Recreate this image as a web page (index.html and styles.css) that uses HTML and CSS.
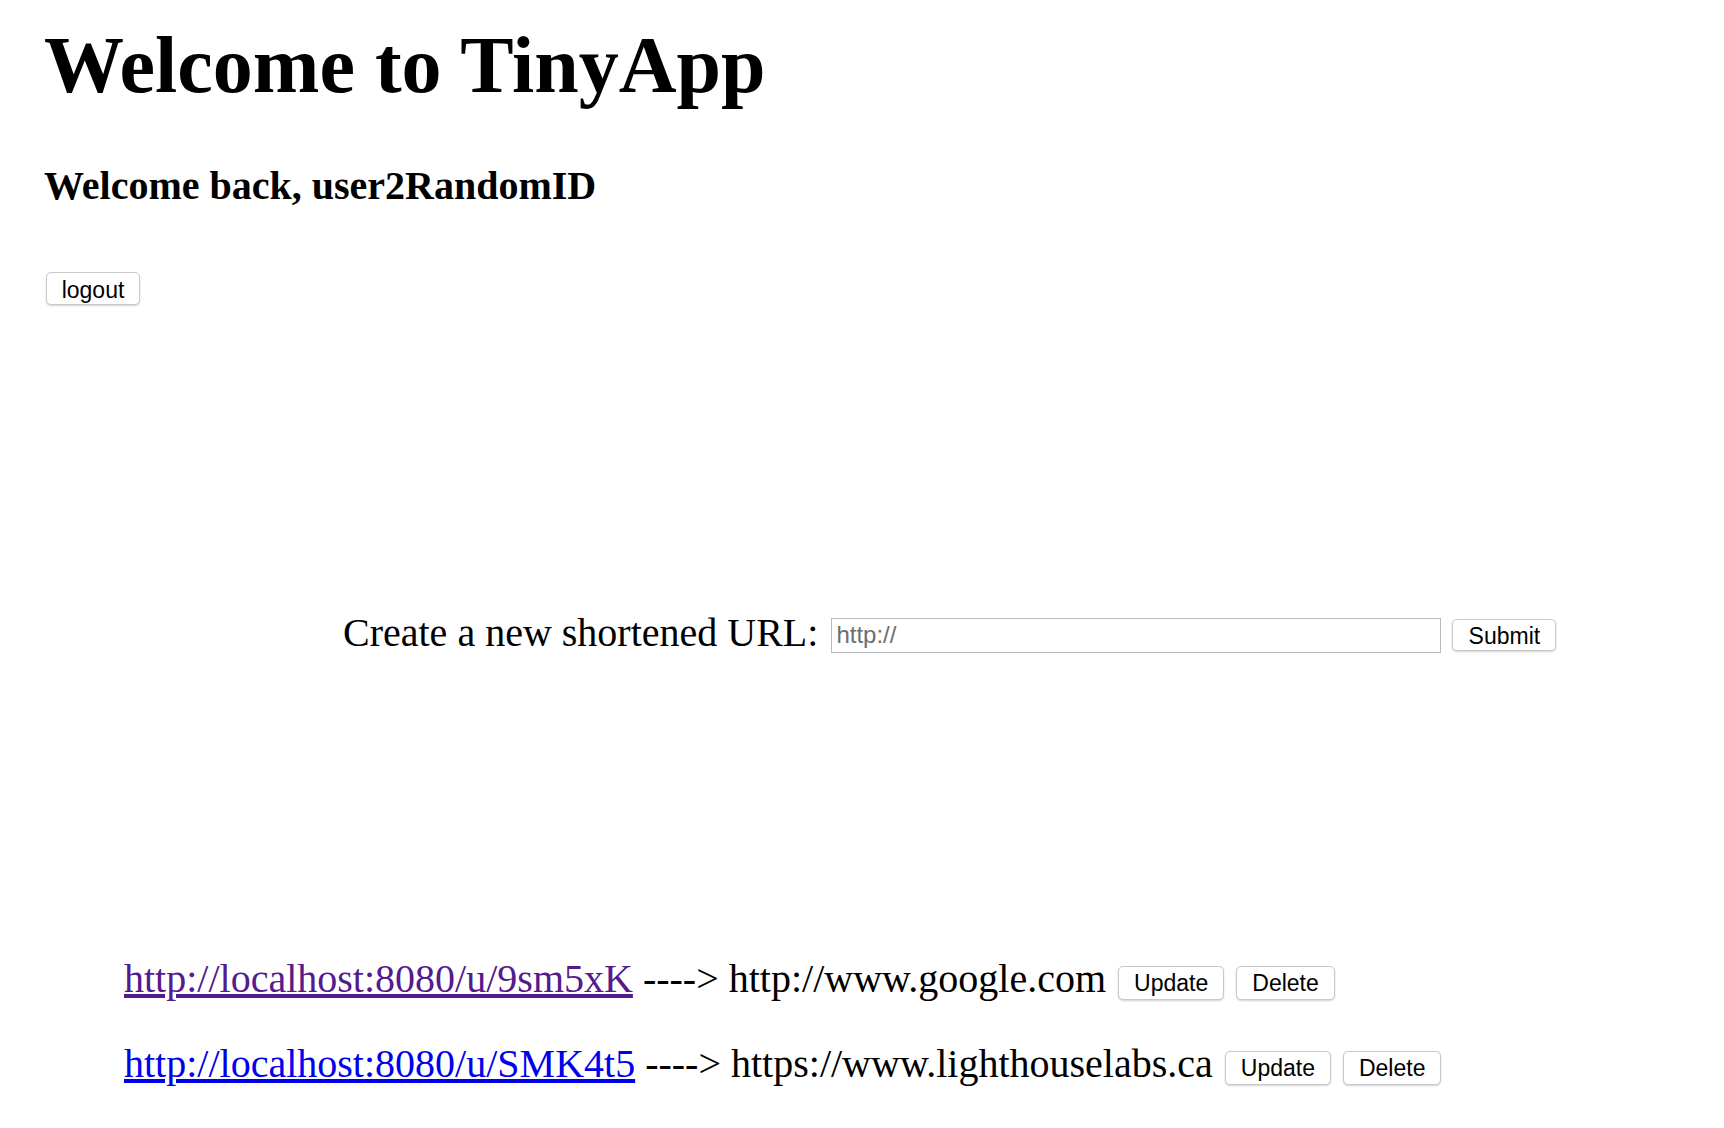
FILE: index.html
```html
<!DOCTYPE html>
<html lang="en">
<head>
<meta charset="utf-8">
<title>TinyApp</title>
<link rel="stylesheet" href="styles.css">
</head>
<body>
<header class="top">
  <h1 class="title">Welcome to TinyApp</h1>
  <h2 class="greeting">Welcome back, user2RandomID</h2>
  <form class="logout-form"><button type="button" class="btn">logout</button></form>
</header>
<main class="content">
  <form class="create-form">
    <label class="create-label" for="longURL">Create a new shortened URL:</label>
    <input class="url-input" id="longURL" type="text" placeholder="http://">
    <button type="button" class="btn">Submit</button>
  </form>
  <ul class="url-list">
    <li class="url-row"><a class="short-link visited" href="#">http://localhost:8080/u/9sm5xK</a> ----&gt; http://www.google.com<form class="inline-form"><button type="button" class="btn">Update</button></form><form class="inline-form"><button type="button" class="btn">Delete</button></form></li>
    <li class="url-row"><a class="short-link" href="#">http://localhost:8080/u/SMK4t5</a> ----&gt; https://www.lighthouselabs.ca<form class="inline-form"><button type="button" class="btn">Update</button></form><form class="inline-form"><button type="button" class="btn">Delete</button></form></li>
  </ul>
</main>
</body>
</html>
```
FILE: styles.css
```css
html, body {
  margin: 0;
  padding: 0;
  background: #ffffff;
}
body {
  font-family: "Liberation Serif", "Times New Roman", serif;
  color: #000;
}
.top {
  padding-left: 44px;
}
.title {
  margin: 25px 0 0 0;
  font-size: 80px;
  line-height: 80px;
  font-weight: bold;
}
.greeting {
  margin: 57px 0 0 0;
  font-size: 40px;
  line-height: 48px;
  font-weight: bold;
}
.logout-form {
  margin: 62px 0 0 2px;
}
.btn {
  font-family: "Liberation Sans", Arial, sans-serif;
  font-size: 23px;
  height: 34px;
  padding: 2px 15px 0 15px;
  box-sizing: border-box;
  background: #fff;
  color: #000;
  border: 1px solid #c8c8c8;
  border-radius: 5px;
  box-shadow: 0 1px 2px rgba(0, 0, 0, 0.18);
  line-height: 1;
}
.logout-form .btn {
  height: 33px;
  width: 94px;
  padding: 3px 0 0 0;
}
.create-form {
  display: flex;
  align-items: center;
  margin-top: 306px;
  padding-left: 343px;
}
.create-label {
  font-size: 40px;
  line-height: 44px;
  padding-bottom: 4px;
}
.url-input {
  margin-left: 13px;
  width: 610px;
  height: 35px;
  box-sizing: border-box;
  border: 1px solid #b9b9b9;
  border-radius: 0;
  padding: 0 4px;
  font-family: "Liberation Sans", Arial, sans-serif;
  font-size: 24px;
}
.url-input::placeholder {
  color: #6e6e6e;
}
.create-form .btn {
  margin-left: 11px;
  height: 32px;
  width: 104px;
  padding: 2px 0 0 0;
}
.url-list {
  list-style: none;
  margin: 297px 0 0 0;
  padding: 0 0 0 124px;
}
.url-row {
  font-size: 40px;
  line-height: 46px;
  margin-bottom: 39px;
  white-space: nowrap;
}
.short-link {
  color: #0000ee;
  text-decoration: underline;
}
.short-link.visited {
  color: #551a8b;
}
.inline-form {
  display: inline-block;
  vertical-align: middle;
  margin-left: 12px;
}
.inline-form .btn {
  display: block;
}
```
